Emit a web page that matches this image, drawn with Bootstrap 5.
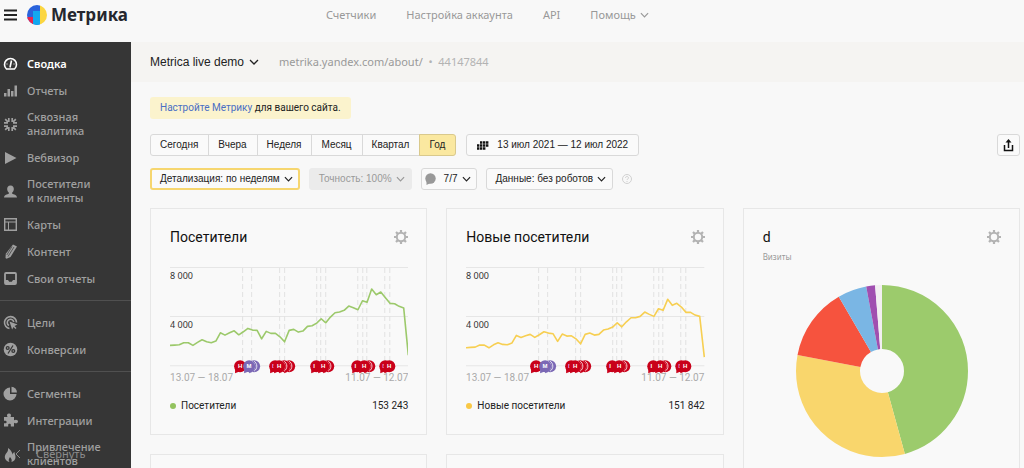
<!DOCTYPE html>
<html lang="ru">
<head>
<meta charset="utf-8">
<meta name="viewport" content="width=device-width, initial-scale=1">
<title>Метрика</title>
<link href="https://cdn.jsdelivr.net/npm/bootstrap@5.3.0/dist/css/bootstrap.min.css" rel="stylesheet">
<style>
  body { font-family: "Noto Sans", sans-serif; font-size: 11px; line-height: 14px; color: #333; background: #f8f8f8; }
  svg { display: block; flex: none; }
  .app-head { flex: none; height: 42px; padding: 0 4px 12px; }
  .brand { margin-left: 10px; }
  .brand-name { font-size: 17px; line-height: 20px; font-weight: 700; color: #25272e; }
  .head-nav { margin-left: 198px; gap: 30px; }
  .head-nav a { color: #999; text-decoration: none; }
  .side { width: 131px; background: #363636; flex: none; }
  .side ul + ul { border-top: 1px solid #505050; }
  .side ul { padding: 8px 0; }
  .side a { display: flex; align-items: center; gap: 9px; min-height: 27px; padding: 6px 3px; color: #a0a0a0; font-weight: 500; text-decoration: none; }
  .side a.on { color: #fff; font-weight: 600; }
  .side svg { width: 15px; height: 15px; }
  .side-fold { left: 15px; bottom: 7px; color: #8b8b8b; font-size: 11px; line-height: 14px; gap: 15px; }
  .side .side-fold svg { width: 6px; height: 8px; }
  .crumbs { height: 40px; padding: 0 19px; background: #f5f4f2; gap: 20px; }
  .crumbs-url { color: #999; }
  .crumbs-id { color: #b3b3b3; }
  .counter-pick { font: 12px/14px "Liberation Sans", sans-serif; color: #222; gap: 5px; }
  .pane { padding: 15px 4px 0 19px; }
  .tip { font: 10px/14px Roboto, sans-serif; padding: 4px 10px; background: #fbf3cd; border-radius: 3px; color: #222; }
  .tip a { color: #4a6fc4; text-decoration: none; }
  .period-row { margin-top: 15px; gap: 10px; }
  .filter-row { margin-top: 12px; gap: 9px; }
  .ctl { font: 10px/12px "Liberation Sans", sans-serif; height: 22px; padding: 0 10px 0 9px; border: 1px solid #d9d9d9; border-radius: 3px; background: #fafafa; color: #222; white-space: nowrap; }
  .ctl.on { background: #fae8a0; border-color: #d9c98c; }
  .ctl:hover { border-color: #bbb; background: #fff; color: #222; }
  .ctl-drop { padding-right: 6px; }
  .ctl-notes { padding: 0 5px 0 3px; }
  .ctl-focus { border: 2px solid #f6d66f; padding: 0 5px 0 8px; }
  .ctl:disabled { background: #ebebeb; border-color: #ebebeb; color: #999; opacity: 1; }
  .boards { display: grid; grid-template-columns: repeat(3, minmax(0, 1fr)); gap: 19px; margin-top: 18px; }
  .widget { border: 1px solid #e7e7e7; padding: 19px 18px 0 19px; height: 227px; background: #f9f9f9; }
  .widget.tall { grid-row: span 2; height: auto; }
  .widget h2 { font: 14px/18px Roboto, sans-serif; color: #111; margin: 0; }
  .gear { color: #b3b3b3; border: 0; background: none; padding: 0; }
  .legend-row { font: 10px/14px Roboto, sans-serif; color: #222; margin-top: 16px; }
  .legend-dot { width: 6px; height: 6px; border-radius: 50%; margin-right: 5px; }
  .sub { font-size: 8px; line-height: 12px; color: #999; margin-top: 5px; }
  .pie { width: 172px; margin: 22px auto 0; }
  .chart { width: 100%; margin-top: 20px; }
</style>
</head>
<body>
<svg width="0" height="0" class="position-absolute" aria-hidden="true">
  <symbol id="chev" viewBox="0 0 10 6"><path d="M1 1l4 4 4-4" fill="none" stroke="currentColor" stroke-width="1.3"/></symbol>
  <symbol id="cog" viewBox="0 0 14 14"><circle cx="7" cy="7" r="4.200" fill="none" stroke="currentColor" stroke-width="2"/><path d="M7 0v3M7 11v3M0 7h3M11 7h3M2 2l2.100 2.100M9.900 9.900L12 12M12 2L9.900 4.100M4.100 9.900L2 12" stroke="currentColor" stroke-width="2.200"/></symbol>
</svg>
<div class="vh-100 d-flex flex-column overflow-hidden">
  <header class="app-head d-flex align-items-center">
    <button type="button" class="btn border-0 p-0" aria-label="Меню"><svg width="13" height="12" viewBox="0 0 13 12"><path d="M0 1.500h13M0 6h13M0 10.500h13" stroke="#222" stroke-width="1.800"/></svg></button>
    <a href="#" class="brand d-flex align-items-center text-decoration-none">
      <svg width="20" height="20" viewBox="0 0 20 20"><clipPath id="rnd"><circle cx="10" cy="10" r="10"/></clipPath><g clip-path="url(#rnd)"><path fill="#2a63dc" d="M0 0h13v20H0z"/><path fill="#fbd640" d="M13 0h7v20h-7z"/><path fill="#e8254f" d="M0 12h6v8H0z"/><path fill="#12a8f0" d="M6 6h7v14H6z"/></g></svg>
      <span class="brand-name ms-1">Метрика</span>
    </a>
    <nav class="head-nav d-flex">
      <a href="#">Счетчики</a><a href="#">Настройка аккаунта</a><a href="#">API</a>
      <a href="#" class="d-flex align-items-center gap-1">Помощь <svg width="9" height="6"><use href="#chev"/></svg></a>
    </nav>
  </header>
  <div class="d-flex flex-fill overflow-hidden">
    <aside class="side position-relative overflow-hidden">
      <ul class="list-unstyled m-0">
        <li><a href="#" class="on"><svg viewBox="0 0 15 15" fill="none" stroke="currentColor" stroke-width="1.600"><path d="M3.500 13A6 6 0 1 1 11.500 13zM7 11.500L8.500 4.500"/><path d="M3.500 8h1M10.500 8h1" stroke-width="1"/></svg>Сводка</a></li>
        <li><a href="#"><svg viewBox="0 0 15 15" fill="currentColor"><path d="M1 10h2.500v3.500H1zM4.500 6H7v7.500H4.500zM8 8h2.500v5.500H8zM11.500 2.500H14v11h-2.500z"/></svg>Отчеты</a></li>
        <li><a href="#"><svg viewBox="0 0 15 15" fill="none" stroke="currentColor" stroke-width="1.700"><path d="M5.800 1v4M9.200 1v4M5.800 10v4M9.200 10v4M1 5.800h4M1 9.200h4M10 5.800h4M10 9.200h4M2.200 2.200l2.600 2.600M12.800 2.200l-2.600 2.600M2.200 12.800l2.600-2.600M12.800 12.800l-2.600-2.600"/></svg><span>Сквозная<br>аналитика</span></a></li>
        <li><a href="#"><svg viewBox="0 0 15 15" fill="currentColor"><path d="M2 2l11.500 6L2 14z"/></svg>Вебвизор</a></li>
        <li><a href="#"><svg viewBox="0 0 15 15" fill="currentColor"><path d="M7.500 1.500c2.400 0 3.600 1.700 3.300 4-.2 1.500-.9 2.500-1.600 3.100v1.200c1.500.6 4.500.9 4.800 3.700H1c.3-2.800 3.300-3.100 4.800-3.700V8.600C5.100 8 4.400 7 4.200 5.500c-.3-2.300.9-4 3.300-4z"/></svg><span>Посетители<br>и клиенты</span></a></li>
        <li><a href="#"><svg viewBox="0 0 15 15" fill="none" stroke="currentColor" stroke-width="1.400"><path d="M1.700 1.700h11.600v11.600H1.700z"/><path d="M1.700 5h11.600M5.500 5v8.300" stroke-width="1"/></svg>Карты</a></li>
        <li><a href="#"><svg viewBox="0 0 15 15"><path fill="currentColor" d="M10 .5l4 2L7.500 13l-4 1.700-1-.6.3-4.300z"/><path d="M11 3L5 12.500M9 2.500L3.800 11" stroke="#363636" stroke-width=".7"/></svg>Контент</a></li>
        <li><a href="#"><svg viewBox="0 0 15 15"><rect x="2" y="2" width="11" height="11" rx="1" fill="none" stroke="currentColor" stroke-width="1.800"/><path fill="currentColor" d="M2 9h3l1.200 1.700h2.600L10 9h3v4H2z"/></svg>Свои отчеты</a></li>
      </ul>
      <ul class="list-unstyled m-0">
        <li><a href="#"><svg viewBox="0 0 15 15" fill="none" stroke="currentColor" stroke-width="1.600"><path d="M6.500 13.500A6 6 0 1 1 13.500 7.500M6 10.500A3.300 3.300 0 1 1 10.800 7"/><path d="M6.500 6.500l8 3-3 1.500 2 2-1 1-2-2-1.400 2.400z" fill="currentColor" stroke="none"/></svg>Цели</a></li>
        <li><a href="#"><svg viewBox="0 0 15 15"><circle cx="7.500" cy="7.500" r="6.800" fill="currentColor"/><g fill="none" stroke="#363636" stroke-width="1.300"><path d="M10 3.500L5 11.500"/><circle cx="4.700" cy="6" r="1.400"/><circle cx="10.300" cy="9" r="1.400"/></g></svg>Конверсии</a></li>
      </ul>
      <ul class="list-unstyled m-0">
        <li><a href="#"><svg viewBox="0 0 15 15" fill="currentColor"><path d="M7 1.500V8h6.500A6.500 6.500 0 1 1 7 1.500z"/><path d="M8.500 .7A6 6 0 0 1 14 6.500H8.500z"/></svg>Сегменты</a></li>
        <li><a href="#"><svg viewBox="0 0 15 15" fill="currentColor"><path d="M1 4h3.500C3.300 2 4.300.5 6 .5S8.700 2 7.500 4H11v3.200c2-1.200 4-.4 4 1.300s-2 2.500-4 1.300V13.500H7.800v-1.800c0-1.400-2.600-1.400-2.600 0v1.800H1v-3.200h1.600c1.400 0 1.400-2.600 0-2.600H1z"/></svg>Интеграции</a></li>
        <li><a href="#"><svg viewBox="0 0 15 15" fill="currentColor"><path d="M6.500 15C5 13.500 6 11.500 7 10c1.500 1.500 2 3 1.500 5 2.500-.8 4-2.500 4-5 0-2-1-3-1-5-1.200.7-1.700 1.500-1.700 2.700C9 5.500 8 3 5 1c.5 3-1 4-2.300 6C.8 10 2 14 6.500 15z"/></svg><span>Привлечение<br>клиентов</span></a></li>
      </ul>
      <button type="button" class="side-fold btn border-0 p-0 position-absolute d-flex align-items-center"><svg viewBox="0 0 6 8"><path d="M5 0L1 4l4 4" fill="none" stroke="currentColor"/></svg>Свернуть</button>
    </aside>
    <main class="flex-fill overflow-hidden">
      <div class="crumbs d-flex align-items-center">
        <button type="button" class="counter-pick btn border-0 p-0 d-flex align-items-center">Metrica live demo <svg width="10" height="6"><use href="#chev"/></svg></button>
        <span class="crumbs-url">metrika.yandex.com/about/ <span class="crumbs-id">&nbsp;•&nbsp; 44147844</span></span>
      </div>
      <div class="pane">
        <div class="d-flex"><div class="tip"><a href="#">Настройте Метрику</a> для вашего сайта.</div></div>
        <div class="period-row d-flex align-items-center">
          <div class="btn-group" role="group" aria-label="Период">
            <button type="button" class="btn ctl">Сегодня</button><button type="button" class="btn ctl">Вчера</button><button type="button" class="btn ctl">Неделя</button><button type="button" class="btn ctl">Месяц</button><button type="button" class="btn ctl">Квартал</button><button type="button" class="btn ctl on">Год</button>
          </div>
          <button type="button" class="btn ctl d-flex align-items-center gap-2"><svg width="13" height="9" viewBox="0 0 13 9"><path d="M4 1.500h9M1 4.500h12M1 7.500h9" stroke="#111" stroke-width="2.300" stroke-dasharray="2.400 .6"/></svg>13 июл 2021 — 12 июл 2022</button>
          <button type="button" class="btn ctl ms-auto px-1 d-flex align-items-center" aria-label="Экспорт"><svg width="13" height="13" viewBox="0 0 13 13"><path d="M2.500 6v5.500h8V6M6.500 9V2.500" fill="none" stroke="#111" stroke-width="1.500"/><path d="M6.500 0l3 3.500h-6z" fill="#111"/></svg></button>
        </div>
        <div class="filter-row d-flex align-items-center">
          <button type="button" class="btn ctl ctl-focus d-flex align-items-center gap-1">Детализация: по неделям <svg width="9" height="6"><use href="#chev"/></svg></button>
          <button type="button" class="btn ctl ctl-drop d-flex align-items-center gap-1" disabled>Точность: 100% <svg width="9" height="6"><use href="#chev"/></svg></button>
          <button type="button" class="btn ctl ctl-notes d-flex align-items-center gap-1"><svg width="11" height="12" viewBox="0 0 11 12"><circle cx="5.500" cy="5.500" r="5.200" fill="#999"/><path d="M1.500 7v5l4-2z" fill="#999"/></svg><span class="ms-1">7/7</span> <svg width="9" height="6"><use href="#chev"/></svg></button>
          <button type="button" class="btn ctl ctl-drop d-flex align-items-center gap-1">Данные: без роботов <svg width="9" height="6"><use href="#chev"/></svg></button>
          <svg width="10" height="10" viewBox="0 0 10 10" fill="none" stroke="#d0d0d0"><circle cx="5" cy="5" r="4.500"/><path d="M3.500 4c0-2 3-2 3 0 0 1-1.500 1-1.500 2M5 7v1"/></svg>
        </div>
        <div class="boards">
          <section class="widget">
            <div class="d-flex justify-content-between align-items-center"><h2>Посетители</h2><button type="button" class="gear" aria-label="Настроить"><svg width="14" height="14"><use href="#cog"/></svg></button></div>
            <svg class="chart" viewBox="0 0 238 117" data-color="#9cc96b" data-points="435 434 433 427 427 435 426 418 424 427 422 397 404 397 391 403 394 384 389 390 415 393 399 399 409 424 390 387 395 392 378 376 368 355 367 350 337 335 330 317 322 328 301 306 266 283 275 292 309 310 318 323 464"></svg>
            <div class="legend-row d-flex align-items-center"><span class="legend-dot" style="background:#93c35f"></span>Посетители<span class="ms-auto">153 243</span></div>
          </section>
          <section class="widget">
            <div class="d-flex justify-content-between align-items-center"><h2>Новые посетители</h2><button type="button" class="gear" aria-label="Настроить"><svg width="14" height="14"><use href="#cog"/></svg></button></div>
            <svg class="chart" viewBox="0 0 238 117" data-color="#f7cf52" data-points="442 441 440 434 434 442 433 427 432 433 428 405 411 406 402 411 403 394 398 400 423 401 407 406 415 430 402 398 404 402 389 386 380 367 379 364 352 352 348 335 342 348 325 330 297 315 309 320 336 336 344 348 470"></svg>
            <div class="legend-row d-flex align-items-center"><span class="legend-dot" style="background:#f9c846"></span>Новые посетители<span class="ms-auto">151 842</span></div>
          </section>
          <section class="widget tall">
            <div class="d-flex justify-content-between align-items-center"><h2>d</h2><button type="button" class="gear" aria-label="Настроить"><svg width="14" height="14"><use href="#cog"/></svg></button></div>
            <div class="sub">Визиты</div>
            <svg class="pie" viewBox="0 0 172 172" fill="none" stroke-width="64"><g transform="rotate(-90 86 86)">
              <circle cx="86" cy="86" r="54" stroke="#9ccb6c" pathLength="3600" stroke-dasharray="1645 1955"/>
              <circle cx="86" cy="86" r="54" stroke="#f9d66c" pathLength="3600" stroke-dasharray="0 1645 1163 792"/>
              <circle cx="86" cy="86" r="54" stroke="#f6533e" pathLength="3600" stroke-dasharray="0 2808 490 302"/>
              <circle cx="86" cy="86" r="54" stroke="#7ab6e4" pathLength="3600" stroke-dasharray="0 3298 196 106"/>
              <circle cx="86" cy="86" r="54" stroke="#a04fb0" pathLength="3600" stroke-dasharray="0 3494 59 47"/>
              <circle cx="86" cy="86" r="54" stroke="#f2eff1" pathLength="3600" stroke-dasharray="0 3553 47 0"/>
            </g></svg>
          </section>
          <section class="widget"></section>
          <section class="widget"></section>
        </div>
      </div>
    </main>
  </div>
</div>
<script src="https://cdn.jsdelivr.net/npm/bootstrap@5.3.0/dist/js/bootstrap.bundle.min.js"></script>
<script>
  // Event days (dashed guides) and the note pins that sit on the time axis.
  const guides = [72, 81, 109, 114, 146, 150, 155, 187, 192, 196, 214, 219];
  const pins = [
    { tail: [], head: [[70, 'H', '#c9001a']] },
    { tail: [84], head: [[79, 'M', '#7b68b5']], tint: '#7b68b5' },
    { tail: [119, 114], head: [[105, 'I', '#c9001a'], [109, 'H', '#c9001a']] },
    { tail: [158], head: [[146, 'I', '#c9001a'], [153, 'H', '#c9001a']] },
    { tail: [199], head: [[187, 'I', '#c9001a'], [194, 'H', '#c9001a']] },
    { tail: [], head: [[215, 'I', '#c9001a'], [219, 'H', '#c9001a']] }
  ];
  const disc = (x, fill) => `<circle cx="${x}" cy="100" r="6" fill="${fill}"/><path d="M${x - 5} 101v6l5-2z" fill="${fill}"/>`;
  const rim = x => `<path d="M${x + 3} 95a6 6 0 0 1 0 10" fill="none" stroke="#fff" stroke-width=".8"/>`;
  document.querySelectorAll('.chart').forEach(svg => {
    const values = svg.dataset.points.split(' ').map(Number);
    const line = values.map((v, i) => `${(i * 238 / (values.length - 1)).toFixed(1)},${((v - 197) / 3).toFixed(1)}`).join(' ');
    let out = '<path d="M0 1.500h238M0 50.500h238M0 99.500h238" stroke="#e6e6e6"/>';
    guides.forEach(x => out += `<path d="M${x + .5} 2v97" stroke="#e2e2e2" stroke-dasharray="5 3"/>`);
    out += '<g font-family="Noto Sans, sans-serif" font-size="9" fill="#333"><text x="0" y="13">8 000</text><text x="0" y="62">4 000</text></g>';
    out += '<g font-family="Roboto, sans-serif" font-size="10" fill="#aaa"><text x="0" y="115">13.07 — 18.07</text><text x="238" y="115" text-anchor="end">11.07 — 12.07</text></g>';
    out += `<polyline points="${line}" fill="none" stroke="${svg.dataset.color}" stroke-width="1.600" stroke-linejoin="round"/>`;
    pins.forEach(p => {
      p.tail.forEach(x => out += disc(x, p.tint || '#c9001a') + rim(x - 5));
      p.head.forEach(([x, s, c]) => out += disc(x, c) + `<text x="${s === 'I' ? x - 2 : x}" y="102" text-anchor="middle" font-family="Liberation Sans, sans-serif" font-size="6" font-weight="700" fill="#fff">${s}</text>`);
      p.tail.forEach(x => out += rim(x - 3));
    });
    svg.innerHTML = out;
  });
</script>
</body>
</html>
